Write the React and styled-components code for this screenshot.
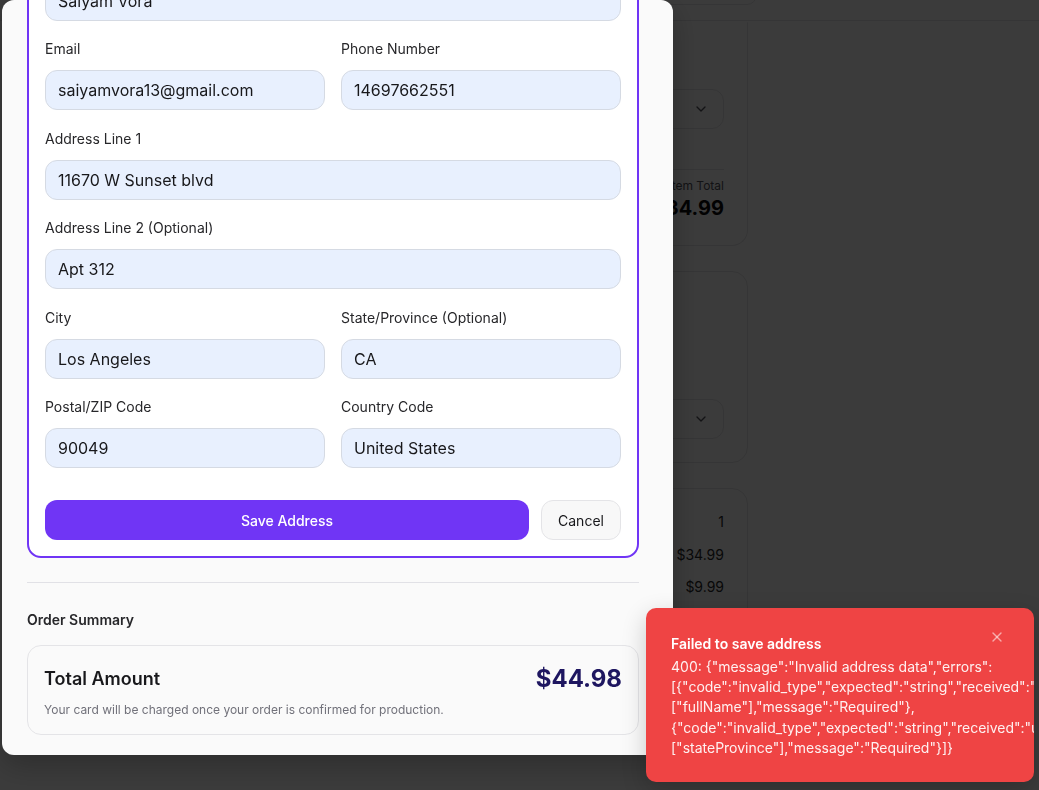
import React, { useLayoutEffect, useRef } from 'react';
import styled, { createGlobalStyle } from 'styled-components';
import { ChevronDown, X } from 'lucide-react';

const GlobalStyle = createGlobalStyle`
  html, body {
    margin: 0;
    height: 100%;
  }
  body {
    font-family: Inter, "Noto Sans", "Liberation Sans", sans-serif;
    background: #ffffff;
    color: #18181b;
    overflow: hidden;
  }
`;

/* ---------- page behind the dialog ---------- */

const Page = styled.div`
  min-height: 100vh;
  background: #ffffff;
`;

const TopBar = styled.header`
  height: 21px;
  border-bottom: 1px solid #e4e4e7;
  display: flex;
  align-items: flex-end;
  padding: 0 282px 15px 0;
  box-sizing: border-box;
  justify-content: flex-end;
`;

const TopBarBox = styled.div`
  width: 220px;
  height: 40px;
  flex: none;
  border: 1px solid #e4e4e7;
  border-radius: 10px;
`;

const PageBody = styled.main`
  display: grid;
  grid-template-columns: 732px 1fr;
  padding: 0 16px;
`;

const Column = styled.div`
  display: flex;
  flex-direction: column;
  gap: 25px;
  margin-top: 1px;
`;

const PageCard = styled.section`
  border: 1px solid #e4e4e7;
  border-radius: 16px;
  padding: 23px;
  display: flex;
  flex-direction: column;

  &:first-child {
    border-top-color: transparent;
    border-top-left-radius: 0;
    border-top-right-radius: 0;
  }
`;

const CardTitle = styled.h3`
  margin: 0;
  font-size: 16px;
  line-height: 20px;
  font-weight: 600;
`;

const CardText = styled.p`
  margin: 8px 0 0;
  font-size: 14px;
  line-height: 20px;
  color: #71717a;
`;

const FakeSelect = styled.div`
  height: 40px;
  border: 1px solid #e4e4e7;
  border-radius: 12px;
  display: flex;
  align-items: center;
  justify-content: space-between;
  padding: 0 14px;
  box-sizing: border-box;
  margin-top: ${({ $top }) => $top}px;
  font-size: 14px;
  color: #18181b;
`;

const TotalBlock = styled.div`
  margin-top: 40px;
  border-top: 1px solid #e4e4e7;
  padding-top: 8px;
  display: flex;
  flex-direction: column;
  align-items: flex-end;
`;

const TotalLabel = styled.span`
  font-size: 12px;
  line-height: 16px;
  color: #52525b;
`;

const TotalValue = styled.span`
  font-size: 20px;
  line-height: 28px;
  font-weight: 700;
  color: #09090b;
`;

const SummaryRows = styled.div`
  display: flex;
  flex-direction: column;
  gap: 12.5px;
`;

const SummaryRow = styled.div`
  display: flex;
  justify-content: space-between;
  font-size: 14px;
  line-height: 20px;
  color: #27272a;
`;

const Overlay = styled.div`
  position: fixed;
  inset: 0;
  background: rgba(0, 0, 0, 0.77);
`;

/* ---------- dialog ---------- */

const Dialog = styled.div`
  position: fixed;
  left: 2px;
  top: 0;
  width: 671px;
  height: 755px;
  background: #fafafa;
  border-radius: 12px;
  overflow: hidden;
  box-shadow: 0 10px 30px rgba(0, 0, 0, 0.25);
`;

const DialogBody = styled.div`
  height: 100%;
  overflow-y: auto;
  box-sizing: border-box;
  padding: 24px 34px 20px 25px;
  scrollbar-width: none;
  &::-webkit-scrollbar {
    display: none;
  }
`;

const FormCard = styled.form`
  background: #ffffff;
  border: 2px solid #7035f5;
  border-radius: 14px;
  padding: 16px 16px 16px;
  display: flex;
  flex-direction: column;
  gap: 18.5px;
`;

const FormTitle = styled.h3`
  margin: 0;
  font-size: 16px;
  line-height: 24px;
  font-weight: 600;
  color: #18181b;
`;

const Row = styled.div`
  display: grid;
  grid-template-columns: ${({ $cols }) => ($cols === 2 ? '1fr 1fr' : '1fr')};
  gap: 16px;
`;

const Field = styled.label`
  display: flex;
  flex-direction: column;
  gap: 11px;
`;

const Label = styled.span`
  font-size: 14px;
  line-height: 20px;
  color: #27272a;
`;

const Input = styled.input`
  width: 100%;
  height: 40px;
  box-sizing: border-box;
  padding: 0 12px;
  border: 1px solid #d5dae3;
  border-radius: 12px;
  background: #e8f0fe;
  font-family: inherit;
  font-size: 16px;
  color: #18181b;
  outline: none;
`;

const Actions = styled.div`
  display: flex;
  gap: 12px;
  margin-top: 13.5px;
`;

const PrimaryButton = styled.button`
  flex: 1;
  height: 40px;
  border: none;
  border-radius: 12px;
  background: #7035f5;
  color: #ffffff;
  font-family: inherit;
  font-size: 14px;
  font-weight: 500;
`;

const GhostButton = styled.button`
  width: 80px;
  height: 40px;
  border: 1px solid #e4e4e7;
  border-radius: 12px;
  background: #f8f8f8;
  color: #18181b;
  font-family: inherit;
  font-size: 14px;
`;

const Divider = styled.hr`
  border: none;
  border-top: 1px solid #e1e1e6;
  margin: 24px 0 27px;
`;

const SectionHeading = styled.h4`
  margin: 0 0 15px;
  font-size: 14px;
  line-height: 20px;
  font-weight: 600;
  color: #27272a;
`;

const TotalCard = styled.div`
  border: 1px solid #e4e4e7;
  border-radius: 14px;
  background: #fafafa;
  padding: 18px 16px 16px;
  display: flex;
  flex-direction: column;
  gap: 10px;
`;

const TotalLine = styled.div`
  display: flex;
  justify-content: space-between;
  align-items: center;
  height: 28px;
`;

const TotalName = styled.span`
  font-size: 18px;
  font-weight: 600;
  color: #18181b;
`;

const TotalAmount = styled.span`
  font-size: 24px;
  font-weight: 700;
  color: #1e1660;
`;

const Note = styled.p`
  margin: 0;
  font-size: 12px;
  line-height: 16px;
  color: #71717a;
`;

/* ---------- toast ---------- */

const Toast = styled.div`
  position: fixed;
  right: 5px;
  bottom: 8px;
  width: 388px;
  box-sizing: border-box;
  padding: 26px 25px 24px;
  border-radius: 10px;
  background: #ef4444;
  color: #ffffff;
  overflow: hidden;
  box-shadow: 0 8px 24px rgba(0, 0, 0, 0.2);
`;

const ToastTitle = styled.div`
  font-size: 14px;
  line-height: 20px;
  font-weight: 600;
`;

const ToastBody = styled.div`
  margin-top: 3px;
  font-size: 14px;
  line-height: 20.25px;
  color: rgba(255, 255, 255, 0.92);
`;

const ToastClose = styled.button`
  position: absolute;
  top: 21px;
  right: 29px;
  padding: 0;
  border: none;
  background: none;
  color: rgba(255, 255, 255, 0.55);
  display: flex;
`;

const fields = [
  [
    { label: 'Email', value: 'saiyamvora13@gmail.com' },
    { label: 'Phone Number', value: '14697662551' },
  ],
  [{ label: 'Address Line 1', value: '11670 W Sunset blvd' }],
  [{ label: 'Address Line 2 (Optional)', value: 'Apt 312' }],
  [
    { label: 'City', value: 'Los Angeles' },
    { label: 'State/Province (Optional)', value: 'CA' },
  ],
  [
    { label: 'Postal/ZIP Code', value: '90049' },
    { label: 'Country Code', value: 'United States' },
  ],
];

const errorText =
  '400: {"message":"Invalid address data","errors":[{"code":"invalid_type","expected":"string","received":"undefined","path":["fullName"],"message":"Required"},{"code":"invalid_type","expected":"string","received":"undefined","path":["stateProvince"],"message":"Required"}]}';

const App = () => {
  const bodyRef = useRef(null);

  // dialog is scrolled all the way down
  useLayoutEffect(() => {
    const el = bodyRef.current;
    if (el) el.scrollTop = el.scrollHeight;
  }, []);

  return (
    <>
      <GlobalStyle />
      <Page>
        <TopBar>
          <TopBarBox />
        </TopBar>
        <PageBody>
          <Column>
            <PageCard>
              <CardTitle>Custom T-Shirt</CardTitle>
              <FakeSelect $top={23}>
                <span>Medium</span>
                <ChevronDown size={16} color="#52525b" />
              </FakeSelect>
              <TotalBlock>
                <TotalLabel>Item Total</TotalLabel>
                <TotalValue>$34.99</TotalValue>
              </TotalBlock>
            </PageCard>
            <PageCard>
              <CardTitle>Shipping Method</CardTitle>
              <CardText>Choose how you want your order delivered.</CardText>
              <CardText>Standard shipping takes 5-7 business days.</CardText>
              <FakeSelect $top={28}>
                <span>Standard</span>
                <ChevronDown size={16} color="#52525b" />
              </FakeSelect>
            </PageCard>
            <PageCard>
              <SummaryRows>
                <SummaryRow><span>Quantity</span><span>1</span></SummaryRow>
                <SummaryRow><span>Subtotal</span><span>$34.99</span></SummaryRow>
                <SummaryRow><span>Shipping</span><span>$9.99</span></SummaryRow>
                <SummaryRow><span>Total</span><span>$44.98</span></SummaryRow>
              </SummaryRows>
            </PageCard>
          </Column>
        </PageBody>
      </Page>

      <Overlay />

      <Dialog>
        <DialogBody ref={bodyRef}>
          <FormCard onSubmit={(e) => e.preventDefault()}>
            <FormTitle>Shipping Address</FormTitle>
            <Row>
              <Field>
                <Label>Full Name</Label>
                <Input value="Saiyam Vora" readOnly />
              </Field>
            </Row>
            {fields.map((row, i) => (
              <Row key={i} $cols={row.length}>
                {row.map((f) => (
                  <Field key={f.label}>
                    <Label>{f.label}</Label>
                    <Input value={f.value} readOnly />
                  </Field>
                ))}
              </Row>
            ))}
            <Actions>
              <PrimaryButton type="submit">Save Address</PrimaryButton>
              <GhostButton type="button">Cancel</GhostButton>
            </Actions>
          </FormCard>

          <Divider />

          <SectionHeading>Order Summary</SectionHeading>
          <TotalCard>
            <TotalLine>
              <TotalName>Total Amount</TotalName>
              <TotalAmount>$44.98</TotalAmount>
            </TotalLine>
            <Note>Your card will be charged once your order is confirmed for production.</Note>
          </TotalCard>
        </DialogBody>
      </Dialog>

      <Toast>
        <ToastTitle>Failed to save address</ToastTitle>
        <ToastBody>{errorText}</ToastBody>
        <ToastClose type="button" aria-label="Close">
          <X size={16} strokeWidth={2} />
        </ToastClose>
      </Toast>
    </>
  );
};

export default App;
